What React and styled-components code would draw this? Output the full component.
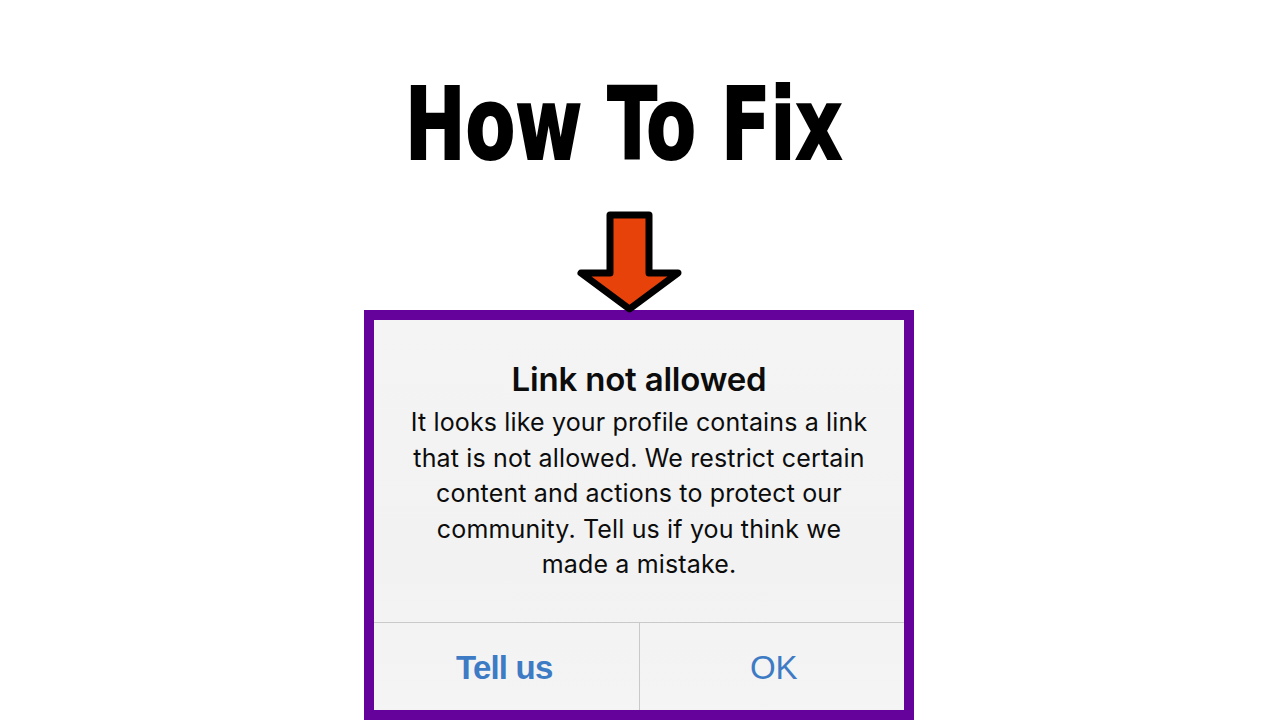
import React from "react";
import styled, { createGlobalStyle } from "styled-components";

const Global = createGlobalStyle`
  html, body { margin: 0; padding: 0; background: #ffffff; }
  body { font-family: "Inter", "Roboto", sans-serif; }
`;

const Page = styled.div`
  height: 720px;
  overflow: hidden;
  display: flex;
  flex-direction: column;
  align-items: center;
  background: #ffffff;
`;

const Heading = styled.h1`
  margin: 75px 32px 0 0;
  font-family: "DejaVu Sans Condensed", "Liberation Sans", sans-serif;
  font-weight: 700;
  font-size: 100px;
  line-height: 100px;
  color: #000;
  -webkit-text-stroke: 2px #000;
  letter-spacing: 0;
  transform: scaleX(0.805);
  transform-origin: 50% 50%;
  white-space: nowrap;
`;

const ArrowWrap = styled.div`
  margin-top: 34px;
  margin-bottom: -5px;
  margin-right: 20px;
  position: relative;
  z-index: 2;
  line-height: 0;
`;

const Frame = styled.div`
  box-sizing: border-box;
  width: 550px;
  height: 410px;
  flex-shrink: 0;
  margin-right: 2px;
  border: 10px solid #65029c;
  display: flex;
  flex-direction: column;
  background: linear-gradient(180deg, #f4f4f4 0%, #f2f2f2 60%, #f5f4f4 100%);
`;

const Body = styled.div`
  height: 302px;
  box-sizing: border-box;
  padding: 39px 10px 0;
  text-align: center;
  color: #0c0c0c;
`;

const Title = styled.div`
  font-family: "Inter", "Roboto", sans-serif;
  font-weight: 600;
  font-size: 33px;
  line-height: 40px;
  letter-spacing: -0.2px;
`;

const Message = styled.p`
  margin: 6px 0 0;
  font-family: "Inter", "Roboto", sans-serif;
  font-weight: 400;
  font-size: 25px;
  line-height: 35.5px;
  letter-spacing: 0.15px;
`;

const Actions = styled.div`
  flex: 1;
  display: grid;
  grid-template-columns: 1fr 1px 1fr;
  border-top: 1px solid #c9c9c9;
`;

const Divider = styled.div`
  background: #c9c9c9;
`;

const Action = styled.button`
  border: 0;
  background: transparent;
  padding: 0;
  margin: 0;
  font-family: "Liberation Sans", "Roboto", sans-serif;
  font-size: 33px;
  font-weight: ${(p) => (p.$primary ? 700 : 400)};
  color: #3e7bc5;
  letter-spacing: ${(p) => (p.$primary ? "-0.8px" : "0")};
  padding-top: 2px;
  padding-right: ${(p) => (p.$primary ? "4px" : "0")};
  padding-left: ${(p) => (p.$primary ? "0" : "4px")};
  cursor: pointer;
`;

function DownArrow() {
  return (
    <svg width="110" height="106" viewBox="0 0 110 106">
      <path
        d="M35 6 H74 V64 H103 L54.5 100 L6 64 H35 Z"
        fill="#e8420b"
        stroke="#000"
        strokeWidth="7"
        strokeLinejoin="round"
      />
    </svg>
  );
}

export default function App() {
  return (
    <>
      <Global />
      <Page>
        <Heading>How To Fix</Heading>
        <ArrowWrap>
          <DownArrow />
        </ArrowWrap>
        <Frame>
          <Body>
            <Title>Link not allowed</Title>
            <Message>
              It looks like your profile contains a link
              <br />
              that is not allowed. We restrict certain
              <br />
              content and actions to protect our
              <br />
              community. Tell us if you think we
              <br />
              made a mistake.
            </Message>
          </Body>
          <Actions>
            <Action $primary>Tell us</Action>
            <Divider />
            <Action>OK</Action>
          </Actions>
        </Frame>
      </Page>
    </>
  );
}
